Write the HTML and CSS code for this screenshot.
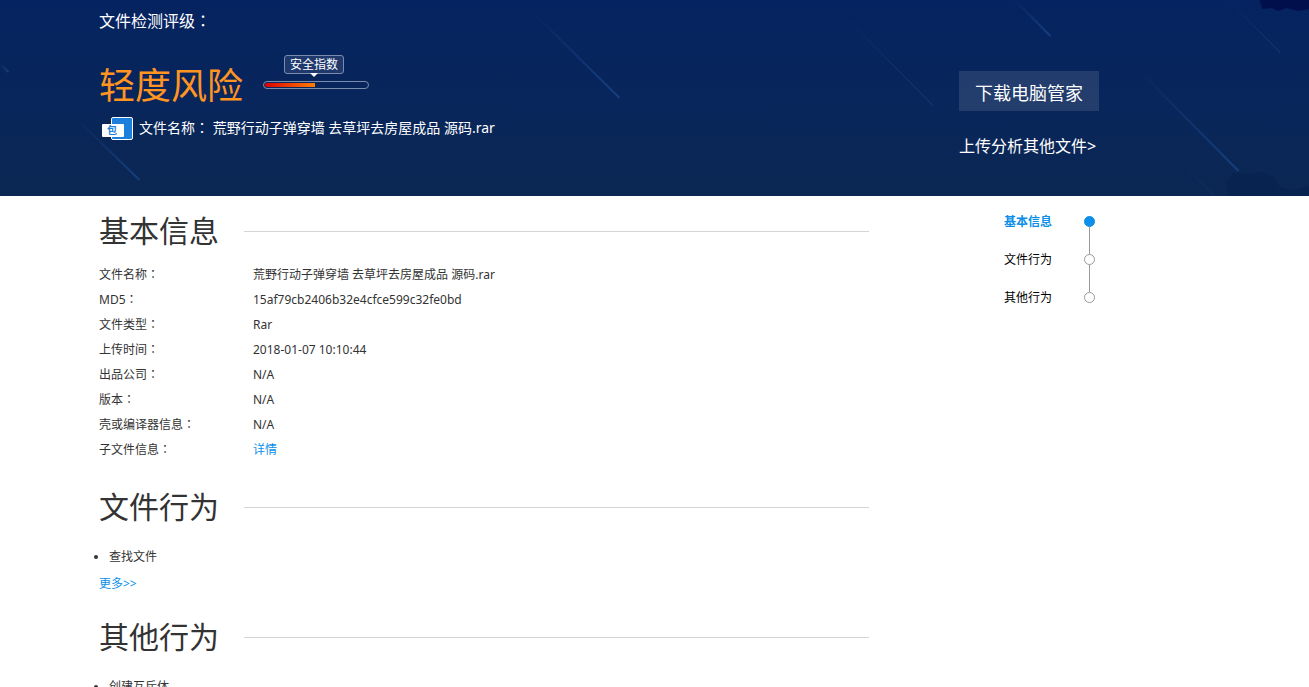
FILE: index.html
```html
<!DOCTYPE html>
<html>

<head>
  <meta charset="utf-8">
  <meta name="viewport" content="width=device-width, initial-scale=1">
  <title>文件检测评级</title>
  <link rel="stylesheet" href="styles.css">
</head>

<body>
  <header class="banner">
    <!-- meteor lines behind the banner -->
    <svg class="banner-bg" width="1309" height="196" viewBox="0 0 1309 196" aria-hidden="true">
      <defs>
        <linearGradient id="streak" x1="0" y1="0" x2="1" y2="1">
          <stop offset="0" stop-color="#1d4c93" stop-opacity="0" />
          <stop offset="1" stop-color="#1d4c93" stop-opacity="0.65" />
        </linearGradient>
      </defs>
      <path class="corner" d="M1259 0l3 9 9-1 7 3 8-3 12 3 11-2V0z" />
      <path class="corner faint" d="M1228 196l-3-14 8-9 15 1 14-2 12 6 5 9 14 3 16-4v10z" />
      <g stroke="url(#streak)" stroke-width="2">
        <path d="M0 64l8 8" />
        <path d="M528 8l91 90" />
        <path d="M75 118l64 62" />
        <path d="M1013 -1l37 37" />
        <path d="M1138 70l100 101" />
      </g>
      <g stroke="url(#streak)">
        <path d="M833 5l100 101" />
        <path d="M1228 0l52 53" />
        <path d="M1171 153l43 43" opacity="0.5" />
      </g>
    </svg>

    <div class="wrap banner-inner">
      <div class="result">
        <p class="result-title">文件检测评级<span class="colon">：</span></p>
        <div class="result-level">
          <h1 class="level">轻度风险</h1>
          <div class="gauge">
            <span class="gauge-label" id="gaugeLabel">安全指数</span>
            <div class="gauge-track" role="meter" aria-labelledby="gaugeLabel" aria-valuemin="0" aria-valuemax="100" aria-valuenow="49">
              <div class="gauge-bar" style="width: 49%"></div>
            </div>
          </div>
        </div>
        <div class="result-file">
          <svg class="file-icon" width="31" height="23" viewBox="0 0 31 23" aria-hidden="true">
            <rect x="9.5" y="0.5" width="21" height="22" rx="1.5" fill="#1c7fdc" stroke="#fff" />
            <rect x="0" y="7" width="22" height="13" rx="1" fill="#fff" />
            <text class="file-icon-text" x="5" y="17">包</text>
          </svg>
          <span class="file-name">文件名称<span class="colon">：</span> 荒野行动子弹穿墙 去草坪去房屋成品 源码.rar</span>
        </div>
      </div>

      <div class="actions">
        <a class="btn-download" href="#">下载电脑管家</a>
        <a class="upload-link" href="#">上传分析其他文件&gt;</a>
      </div>
    </div>
  </header>

  <div class="wrap content">
    <main class="main">
      <section id="base">
        <h2 class="section-title">基本信息</h2>
        <table class="info-table">
          <tr>
            <th scope="row">文件名称<span class="colon">：</span></th>
            <td>荒野行动子弹穿墙 去草坪去房屋成品 源码.rar</td>
          </tr>
          <tr>
            <th scope="row">MD5<span class="colon">：</span></th>
            <td>15af79cb2406b32e4cfce599c32fe0bd</td>
          </tr>
          <tr>
            <th scope="row">文件类型<span class="colon">：</span></th>
            <td>Rar</td>
          </tr>
          <tr>
            <th scope="row">上传时间<span class="colon">：</span></th>
            <td>2018-01-07 10:10:44</td>
          </tr>
          <tr>
            <th scope="row">出品公司<span class="colon">：</span></th>
            <td>N/A</td>
          </tr>
          <tr>
            <th scope="row">版本<span class="colon">：</span></th>
            <td>N/A</td>
          </tr>
          <tr>
            <th scope="row">壳或编译器信息<span class="colon">：</span></th>
            <td>N/A</td>
          </tr>
          <tr>
            <th scope="row">子文件信息<span class="colon">：</span></th>
            <td><a class="link" href="#">详情</a></td>
          </tr>
        </table>
      </section>

      <section id="file">
        <h2 class="section-title">文件行为</h2>
        <ul class="action-list">
          <li>查找文件</li>
        </ul>
        <a class="link more" href="#">更多&gt;&gt;</a>
      </section>

      <section id="other">
        <h2 class="section-title">其他行为</h2>
        <ul class="action-list">
          <li>创建互斥体</li>
        </ul>
      </section>
    </main>

    <nav class="side-nav">
      <a class="active" href="#base">基本信息</a>
      <a href="#file">文件行为</a>
      <a href="#other">其他行为</a>
    </nav>
  </div>
</body>

</html>
```

FILE: styles.css
```css
*,
*::before,
*::after {
  margin: 0;
  padding: 0;
  box-sizing: border-box;
}

html {
  height: 100%;
  overflow: hidden;
}

body {
  height: 100%;
  overflow-y: auto;
  scrollbar-width: none;
  font-family: "Noto Sans", "Noto Sans CJK SC", sans-serif;
  font-size: 12px;
  line-height: 25px;
  color: #333;
  background-color: #fff;
}

a {
  text-decoration: none;
}

/* full-width colon sits in the middle of its box */
.colon {
  font-family: "Noto Sans CJK TC", sans-serif;
  line-height: 1;
}

.wrap {
  display: flex;
  justify-content: space-between;
  max-width: 1111px;
  margin: 0 auto;
  padding-right: 111px;
}

/* banner */
.banner {
  position: relative;
  overflow: hidden;
  color: #fff;
  background: linear-gradient(#052360, #08265b 50%, #0b2753);
}

.banner-bg {
  position: absolute;
  top: 0;
  left: 50%;
  transform: translateX(-50%);
}

.corner {
  fill: #020f4d;
}

.corner.faint {
  fill: #09214f;
  opacity: 0.6;
}

.banner-inner {
  position: relative;
  padding-top: 11px;
  padding-bottom: 40px;
}

.result-title {
  font-size: 16px;
  line-height: 20px;
}

.result-level {
  display: flex;
  gap: 20px;
  margin-top: 19px;
}

.level {
  padding-top: 12px;
  font-size: 36px;
  font-weight: normal;
  line-height: 48px;
  color: #ff9421;
}

.gauge {
  display: flex;
  flex-direction: column;
  align-items: center;
  padding-top: 5px;
}

.gauge-label {
  position: relative;
  margin-right: 4px;
  padding: 0 5px;
  border: 1px solid #7b8bac;
  border-radius: 3px;
  line-height: 17px;
  background-color: #20396c;
}

.gauge-label::after {
  content: "";
  position: absolute;
  top: 100%;
  left: 50%;
  margin-left: -4px;
  border: 4px solid transparent;
  border-top-color: #fff;
  border-bottom: 0;
}

.gauge-track {
  width: 106px;
  height: 8px;
  margin-top: 7px;
  padding: 1px;
  border: 1px solid #7b8bac;
  border-radius: 4px;
}

.gauge-bar {
  height: 4px;
  border-radius: 2px 0 0 2px;
  background: linear-gradient(to right, #dc0000, #ff7e00);
}

.result-file {
  display: flex;
  align-items: center;
  gap: 6px;
  margin-top: 6px;
  padding-left: 3px;
}

.file-icon-text {
  font-size: 10px;
  font-weight: bold;
  fill: #1c7fdc;
}

.file-name {
  font-size: 14px;
  line-height: 24px;
}

.actions {
  display: flex;
  flex-direction: column;
  padding-top: 60px;
}

.btn-download {
  width: 140px;
  padding-top: 4px;
  font-size: 18px;
  line-height: 36px;
  text-align: center;
  color: #fff;
  background-color: rgba(255, 255, 255, 0.11);
}

.upload-link {
  margin-top: 25px;
  font-size: 16px;
  line-height: 20px;
  color: #fff;
}

.btn-download:hover {
  background-color: rgba(255, 255, 255, 0.2);
}

/* content */
.content {
  padding-top: 13px;
}

.main {
  flex: 0 1 770px;
  padding-top: 2px;
}

.main section {
  margin-bottom: 20px;
}

.section-title {
  display: flex;
  align-items: center;
  gap: 25px;
  font-size: 30px;
  font-weight: normal;
  line-height: 40px;
}

.section-title::after {
  content: "";
  flex: 1;
  height: 1px;
  background-color: #d5d5d5;
}

.info-table {
  width: 100%;
  margin-top: 11px;
  margin-bottom: 25px;
  border-collapse: collapse;
}

.info-table th {
  width: 154px;
  font-weight: normal;
  text-align: left;
}

.link {
  color: #0b8fe8;
}

.action-list {
  margin-top: 17px;
  margin-bottom: 2px;
  padding-left: 10px;
}

.more {
  display: block;
  margin-bottom: 21px;
}

/* side nav */
.side-nav {
  display: flex;
  flex-direction: column;
  gap: 13px;
  padding-right: 4px;
}

.side-nav a {
  position: relative;
  display: flex;
  align-items: center;
  justify-content: space-between;
  width: 91px;
  color: #000;
}

.side-nav a::after {
  content: "";
  width: 11px;
  height: 11px;
  border: 1px solid #999;
  border-radius: 50%;
}

.side-nav a + a::before {
  content: "";
  position: absolute;
  right: 5px;
  bottom: 18px;
  width: 1px;
  height: 27px;
  background-color: #999;
}

.side-nav .active {
  font-weight: bold;
  color: #0b8fe8;
}

.side-nav .active::after {
  border-color: #0b8fe8;
  background-color: #0b8fe8;
}
```
